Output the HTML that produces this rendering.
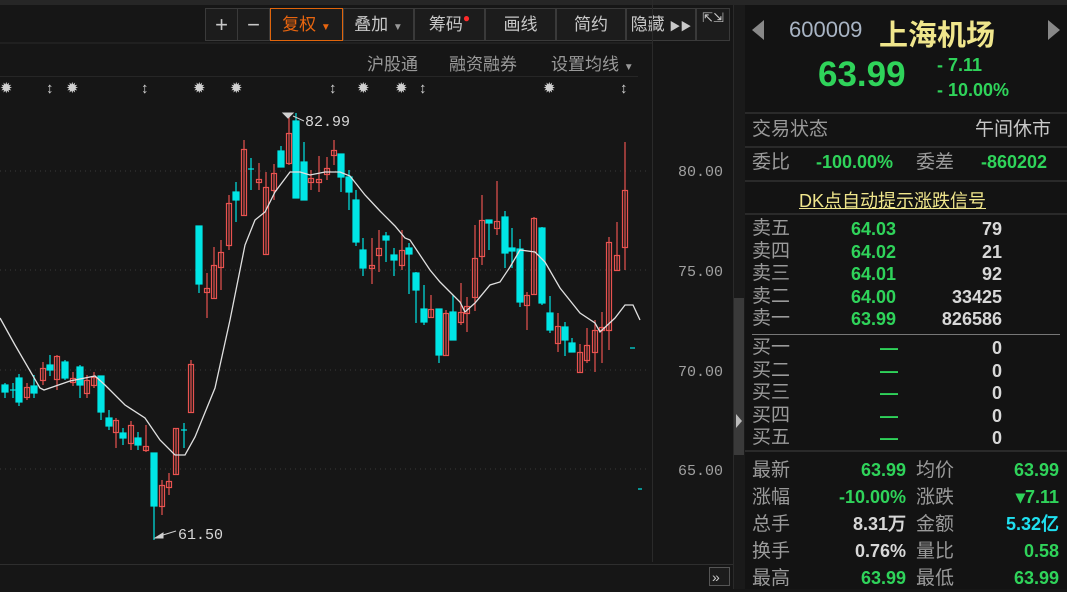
<!DOCTYPE html>
<html><head><meta charset="utf-8"><style>
*{margin:0;padding:0;box-sizing:border-box}
body{width:1067px;height:589px;overflow:hidden;background:#161616;font-family:"Liberation Sans","Noto Sans CJK SC",sans-serif;position:relative;color:#a8a8a8}
.a{position:absolute;white-space:nowrap}
.tb{position:absolute;top:8px;height:33px;border:1px solid #3a3a3a;background:#1c1c1c;color:#c8c8c8;font-size:17px;line-height:31px;text-align:center}
.g{color:#2fd35a}.w{color:#d8d8d8}.gy{color:#9a9a9a}
.r{position:absolute;left:752px;font-size:19px;color:#9a9a9a;line-height:22px}
.num{font-family:"Liberation Sans",sans-serif;font-weight:bold;font-size:18px}
.hl{position:absolute;left:745px;width:322px;height:2px;background:#2a2a2a}
</style></head><body>
<div class="a" style="left:0;top:0;width:1067px;height:5px;background:#262626"></div>
<!-- toolbar -->
<div class="tb" style="left:205px;width:33px;font-size:22px">+</div>
<div class="tb" style="left:237px;width:33px;font-size:22px">−</div>
<div class="tb" style="left:270px;width:73px;border-color:#e0650c;color:#e8650f">复权 <span style="font-size:10px">▼</span></div>
<div class="tb" style="left:343px;width:71px">叠加 <span style="font-size:10px;color:#999">▼</span></div>
<div class="tb" style="left:414px;width:71px">筹码<span style="color:#ff2a2a;font-size:12px;vertical-align:top;position:relative;top:-6px">●</span></div>
<div class="tb" style="left:485px;width:71px">画线</div>
<div class="tb" style="left:556px;width:70px">简约</div>
<div class="tb" style="left:626px;width:70px">隐藏 <span style="font-size:11px">▶▶</span></div>
<div class="tb" style="left:696px;width:34px;font-size:13px;line-height:14px;padding-top:2px">⇱⇲</div>
<div class="a" style="left:0;top:42px;width:652px;height:2px;background:#202020"></div>
<div class="a" style="left:367px;top:50px;font-size:17px;color:#9a9a9a">沪股通</div>
<div class="a" style="left:449px;top:50px;font-size:17px;color:#9a9a9a">融资融券</div>
<div class="a" style="left:551px;top:50px;font-size:17px;color:#9a9a9a">设置均线 <span style="font-size:10px">▼</span></div>
<div class="a" style="left:0;top:76px;width:638px;height:1px;background:#262626"></div>
<div class="a" style="left:0;top:80px;font-size:15px;color:#d0d0d0;line-height:18px">
<span class="a" style="left:0">✹</span><span class="a" style="left:46px">↕</span><span class="a" style="left:66px">✹</span><span class="a" style="left:141px">↕</span><span class="a" style="left:193px">✹</span><span class="a" style="left:230px">✹</span><span class="a" style="left:329px">↕</span><span class="a" style="left:357px">✹</span><span class="a" style="left:395px">✹</span><span class="a" style="left:419px">↕</span><span class="a" style="left:543px">✹</span><span class="a" style="left:620px">↕</span></div>
<!-- chart -->
<svg class="a" style="left:0;top:0" width="733" height="589">
<g stroke="#3a3a3a" stroke-dasharray="1 4"><line x1="0" y1="171" x2="650" y2="171"/><line x1="0" y1="270" x2="650" y2="270"/><line x1="0" y1="370" x2="650" y2="370"/><line x1="0" y1="469" x2="650" y2="469"/></g>
<line x1="652.5" y1="0" x2="652.5" y2="562" stroke="#2a2a2a"/>
<line x1="0" y1="564.5" x2="733" y2="564.5" stroke="#2e2e2e"/>
<g font-family="Liberation Mono,monospace" font-size="15" fill="#a0a0a0"><text x="678" y="176">80.00</text><text x="678" y="276">75.00</text><text x="678" y="376">70.00</text><text x="678" y="475">65.00</text></g>
<g stroke="#00e5e5" fill="#00e5e5" stroke-width="1.2">
<line x1="5" y1="383" x2="5" y2="398"/><rect x="2" y="385" width="6" height="7"/>
<line x1="13" y1="383" x2="13" y2="398"/><line x1="10" y1="390" x2="16" y2="390"/>
<line x1="19" y1="374" x2="19" y2="406"/><rect x="16" y="378" width="6" height="24"/>
<line x1="34" y1="375" x2="34" y2="398"/><rect x="31" y="386" width="6" height="7"/>
<line x1="50" y1="355" x2="50" y2="376"/><rect x="47" y="365" width="6" height="5"/>
<line x1="65" y1="360" x2="65" y2="380"/><rect x="62" y="362" width="6" height="16"/>
<line x1="80" y1="365" x2="80" y2="398"/><rect x="77" y="367" width="6" height="18"/>
<line x1="101" y1="376" x2="101" y2="420"/><rect x="98" y="376" width="6" height="36"/>
<line x1="109" y1="410" x2="109" y2="430"/><rect x="106" y="418" width="6" height="8"/>
<line x1="123" y1="428" x2="123" y2="445"/><rect x="120" y="433" width="6" height="5"/>
<line x1="138" y1="432" x2="138" y2="450"/><rect x="135" y="438" width="6" height="7"/>
<line x1="154" y1="453" x2="154" y2="540"/><rect x="151" y="453" width="6" height="53"/>
<line x1="184" y1="423" x2="184" y2="448"/><line x1="181" y1="430" x2="187" y2="430"/>
<line x1="199" y1="226" x2="199" y2="293"/><rect x="196" y="226" width="6" height="58"/>
<line x1="236" y1="182" x2="236" y2="222"/><rect x="233" y="192" width="6" height="8"/>
<line x1="251" y1="158" x2="251" y2="190"/><line x1="248" y1="169" x2="254" y2="169"/>
<line x1="281" y1="146" x2="281" y2="167"/><rect x="278" y="151" width="6" height="16"/>
<line x1="296" y1="113" x2="296" y2="198"/><rect x="293" y="121" width="6" height="77"/>
<line x1="304" y1="142" x2="304" y2="200"/><rect x="301" y="162" width="6" height="38"/>
<line x1="341" y1="154" x2="341" y2="192"/><rect x="338" y="154" width="6" height="23"/>
<line x1="349" y1="170" x2="349" y2="210"/><rect x="346" y="177" width="6" height="15"/>
<line x1="356" y1="190" x2="356" y2="246"/><rect x="353" y="200" width="6" height="42"/>
<line x1="363" y1="238" x2="363" y2="276"/><rect x="360" y="250" width="6" height="18"/>
<line x1="386" y1="232" x2="386" y2="262"/><rect x="383" y="236" width="6" height="4"/>
<line x1="394" y1="248" x2="394" y2="276"/><rect x="391" y="255" width="6" height="5"/>
<line x1="409" y1="243" x2="409" y2="294"/><rect x="406" y="248" width="6" height="6"/>
<line x1="416" y1="272" x2="416" y2="323"/><rect x="413" y="273" width="6" height="17"/>
<line x1="424" y1="285" x2="424" y2="325"/><rect x="421" y="309" width="6" height="13"/>
<line x1="439" y1="309" x2="439" y2="363"/><rect x="436" y="309" width="6" height="46"/>
<line x1="453" y1="295" x2="453" y2="340"/><rect x="450" y="312" width="6" height="28"/>
<line x1="489" y1="220" x2="489" y2="250"/><rect x="486" y="220" width="6" height="3"/>
<line x1="505" y1="211" x2="505" y2="268"/><rect x="502" y="217" width="6" height="36"/>
<line x1="512" y1="228" x2="512" y2="268"/><rect x="509" y="248" width="6" height="3"/>
<line x1="520" y1="239" x2="520" y2="307"/><rect x="517" y="249" width="6" height="53"/>
<line x1="542" y1="227" x2="542" y2="305"/><rect x="539" y="228" width="6" height="75"/>
<line x1="550" y1="296" x2="550" y2="333"/><rect x="547" y="313" width="6" height="17"/>
<line x1="565" y1="322" x2="565" y2="356"/><rect x="562" y="327" width="6" height="13"/>
<line x1="572" y1="338" x2="572" y2="352"/><rect x="569" y="343" width="6" height="9"/>
<line x1="630" y1="348" x2="635" y2="348"/><line x1="638" y1="489" x2="642" y2="489"/>
</g>
<g stroke="#e8524f" fill="none" stroke-width="1.2">
<line x1="27" y1="383" x2="27" y2="400"/><rect x="24.5" y="387.5" width="5" height="10"/>
<line x1="43" y1="362" x2="43" y2="385"/><rect x="40.5" y="368.5" width="5" height="12"/>
<line x1="57" y1="355" x2="57" y2="390"/><rect x="54.5" y="356.5" width="5" height="23"/>
<line x1="73" y1="372" x2="73" y2="386"/><rect x="70.5" y="378.5" width="5" height="4"/>
<line x1="87" y1="375" x2="87" y2="398"/><rect x="84.5" y="380.5" width="5" height="13"/>
<line x1="94" y1="372" x2="94" y2="388"/><rect x="91.5" y="377.5" width="5" height="8"/>
<line x1="116" y1="418" x2="116" y2="448"/><rect x="113.5" y="420.5" width="5" height="12"/>
<line x1="131" y1="421" x2="131" y2="450"/><rect x="128.5" y="425.5" width="5" height="18"/>
<line x1="146" y1="425" x2="146" y2="452"/><rect x="143.5" y="446.5" width="5" height="4"/>
<line x1="162" y1="480" x2="162" y2="515"/><rect x="159.5" y="485.5" width="5" height="21"/>
<line x1="169" y1="473" x2="169" y2="495"/><rect x="166.5" y="481.5" width="5" height="6"/>
<line x1="176" y1="428" x2="176" y2="475"/><rect x="173.5" y="428.5" width="5" height="46"/>
<line x1="191" y1="360" x2="191" y2="412"/><rect x="188.5" y="364.5" width="5" height="48"/>
<line x1="207" y1="273" x2="207" y2="318"/><rect x="204.5" y="288.5" width="5" height="4"/>
<line x1="214" y1="247" x2="214" y2="298"/><rect x="211.5" y="265.5" width="5" height="33"/>
<line x1="221" y1="240" x2="221" y2="290"/><rect x="218.5" y="252.5" width="5" height="15"/>
<line x1="229" y1="195" x2="229" y2="250"/><rect x="226.5" y="203.5" width="5" height="42"/>
<line x1="244" y1="140" x2="244" y2="215"/><rect x="241.5" y="149.5" width="5" height="66"/>
<line x1="259" y1="163" x2="259" y2="190"/><rect x="256.5" y="179.5" width="5" height="3"/>
<line x1="266" y1="172" x2="266" y2="254"/><rect x="263.5" y="187.5" width="5" height="67"/>
<line x1="274" y1="164" x2="274" y2="200"/><rect x="271.5" y="173.5" width="5" height="17"/>
<line x1="289" y1="113" x2="289" y2="165"/><rect x="286.5" y="133.5" width="5" height="30"/>
<line x1="311" y1="170" x2="311" y2="190"/><rect x="308.5" y="178.5" width="5" height="4"/>
<line x1="319" y1="156" x2="319" y2="192"/><rect x="316.5" y="179.5" width="5" height="3"/>
<line x1="327" y1="157" x2="327" y2="180"/><rect x="324.5" y="168.5" width="5" height="6"/>
<line x1="334" y1="140" x2="334" y2="165"/><rect x="331.5" y="150.5" width="5" height="5"/>
<line x1="372" y1="238" x2="372" y2="284"/><rect x="369.5" y="265.5" width="5" height="3"/>
<line x1="379" y1="230" x2="379" y2="272"/><rect x="376.5" y="248.5" width="5" height="7"/>
<line x1="402" y1="230" x2="402" y2="270"/><rect x="399.5" y="250.5" width="5" height="15"/>
<line x1="431" y1="295" x2="431" y2="318"/><rect x="428.5" y="309.5" width="5" height="8"/>
<line x1="446" y1="310" x2="446" y2="356"/><rect x="443.5" y="313.5" width="5" height="42"/>
<line x1="461" y1="283" x2="461" y2="325"/><rect x="458.5" y="312.5" width="5" height="10"/>
<line x1="467" y1="297" x2="467" y2="332"/><rect x="464.5" y="306.5" width="5" height="7"/>
<line x1="475" y1="225" x2="475" y2="311"/><rect x="472.5" y="258.5" width="5" height="39"/>
<line x1="482" y1="195" x2="482" y2="265"/><rect x="479.5" y="220.5" width="5" height="36"/>
<line x1="497" y1="181" x2="497" y2="235"/><rect x="494.5" y="221.5" width="5" height="7"/>
<line x1="527" y1="292" x2="527" y2="330"/><rect x="524.5" y="295.5" width="5" height="10"/>
<line x1="534" y1="217" x2="534" y2="295"/><rect x="531.5" y="218.5" width="5" height="76"/>
<line x1="558" y1="313" x2="558" y2="352"/><rect x="555.5" y="326.5" width="5" height="17"/>
<line x1="580" y1="344" x2="580" y2="373"/><rect x="577.5" y="352.5" width="5" height="20"/>
<line x1="587" y1="328" x2="587" y2="363"/><rect x="584.5" y="345.5" width="5" height="15"/>
<line x1="595" y1="320" x2="595" y2="372"/><rect x="592.5" y="330.5" width="5" height="22"/>
<line x1="602" y1="312" x2="602" y2="363"/><rect x="599.5" y="327.5" width="5" height="3"/>
<line x1="609" y1="237" x2="609" y2="350"/><rect x="606.5" y="242.5" width="5" height="88"/>
<line x1="617" y1="222" x2="617" y2="270"/><rect x="614.5" y="255.5" width="5" height="15"/>
<line x1="625" y1="142" x2="625" y2="270"/><rect x="622.5" y="190.5" width="5" height="57"/>
</g>
<polyline fill="none" stroke="#e0e0e0" stroke-width="1.3" points="0,318 15,345 40,388 44,390 70,381 95,376 105,385 125,405 145,418 160,440 175,455 185,455 195,437 215,388 230,320 245,245 255,220 265,212 275,192 290,172 300,172 310,175 325,172 340,172 350,176 365,195 380,211 395,226 405,238 410,240 430,270 440,282 460,302 465,312 475,303 490,285 500,282 510,267 520,250 535,252 545,262 560,288 580,313 595,323 600,332 615,318 625,305 633,305 640,320"/>
<g stroke="#d0d0d0" fill="#d0d0d0"><path d="M283,113 L293,113 L288,118Z"/><line x1="293" y1="116" x2="304" y2="121"/><path d="M155,538 L163,533 L163,538Z"/><line x1="163" y1="535" x2="176" y2="531"/></g>
<g font-family="Liberation Mono,monospace" font-size="15" fill="#d8d8d8"><text x="305" y="126">82.99</text><text x="178" y="539">61.50</text></g>
<rect x="709.5" y="567.5" width="20" height="18" fill="#1c1c1c" stroke="#555"/><text x="712" y="582" font-size="14" fill="#ccc" font-family="Liberation Sans">»</text>
</svg>
<!-- scrollbar -->
<div class="a" style="left:733px;top:5px;width:12px;height:584px;background:#1a1a1a;border-left:1px solid #2a2a2a"></div>
<div class="a" style="left:734px;top:298px;width:10px;height:157px;background:#3a3a3a"></div>
<div class="a" style="left:736px;top:414px;width:0;height:0;border-top:7px solid transparent;border-bottom:7px solid transparent;border-left:6px solid #bbb"></div>
<!-- right panel -->
<div class="a" style="left:745px;top:5px;width:322px;height:584px;background:#131313"></div>
<div class="a" style="left:752px;top:20px;width:0;height:0;border-top:10px solid transparent;border-bottom:10px solid transparent;border-right:12px solid #888"></div>
<div class="a" style="left:1048px;top:20px;width:0;height:0;border-top:10px solid transparent;border-bottom:10px solid transparent;border-left:12px solid #888"></div>
<div class="a" style="left:789px;top:17px;font-size:22px;color:#a8b4c4">600009</div>
<div class="a" style="left:879px;top:12px;font-size:29px;color:#f0e68c;font-weight:bold">上海机场</div>
<div class="a g" style="left:818px;top:55px;font-size:35px;font-weight:bold">63.99</div>
<div class="a g" style="left:937px;top:55px;font-size:18px;font-weight:bold">- 7.11</div>
<div class="a g" style="left:937px;top:80px;font-size:18px;font-weight:bold">- 10.00%</div>
<div class="hl" style="top:112px"></div>
<div class="r" style="top:119px">交易状态</div>
<div class="r" style="left:975px;top:119px;color:#c8c8c8">午间休市</div>
<div class="hl" style="top:146px"></div>
<div class="r" style="top:152px">委比</div>
<div class="a g num" style="left:816px;top:152px">-100.00%</div>
<div class="r" style="left:916px;top:152px">委差</div>
<div class="a g num" style="left:981px;top:152px">-860202</div>
<div class="hl" style="top:180px"></div>
<div class="a" style="left:799px;top:187px;font-size:18px;color:#f0e68c;text-decoration:underline">DK点自动提示涨跌信号</div>
<div class="hl" style="top:213px"></div>
<div class="r" style="top:218px;line-height:22.5px">卖五<br>卖四<br>卖三<br>卖二<br>卖一</div>
<div class="a g num" style="left:851px;top:218px;line-height:22.5px">64.03<br>64.02<br>64.01<br>64.00<br>63.99</div>
<div class="a w num" style="left:900px;width:102px;text-align:right;top:218px;line-height:22.5px">79<br>21<br>92<br>33425<br>826586</div>
<div class="a" style="left:752px;top:334px;width:308px;height:1px;background:#777"></div>
<div class="r" style="top:337px;line-height:22.5px">买一<br>买二<br>买三<br>买四<br>买五</div>
<div class="a g num" style="left:880px;top:337px;line-height:22.5px">—<br>—<br>—<br>—<br>—</div>
<div class="a w num" style="left:900px;width:102px;text-align:right;top:337px;line-height:22.5px">0<br>0<br>0<br>0<br>0</div>
<div class="hl" style="top:450px"></div>
<div class="r" style="top:457px;line-height:27px">最新<br>涨幅<br>总手<br>换手<br>最高</div>
<div class="a num" style="left:800px;width:106px;text-align:right;top:457px;line-height:27px"><span class="g">63.99</span><br><span class="g">-10.00%</span><br><span class="w">8.31万</span><br><span class="w">0.76%</span><br><span class="g">63.99</span></div>
<div class="r" style="left:916px;top:457px;line-height:27px">均价<br>涨跌<br>金额<br>量比<br>最低</div>
<div class="a num" style="left:960px;width:99px;text-align:right;top:457px;line-height:27px"><span class="g">63.99</span><br><span class="g">▾7.11</span><br><span style="color:#1fe0f0">5.32亿</span><br><span class="g">0.58</span><br><span class="g">63.99</span></div>
</body></html>
